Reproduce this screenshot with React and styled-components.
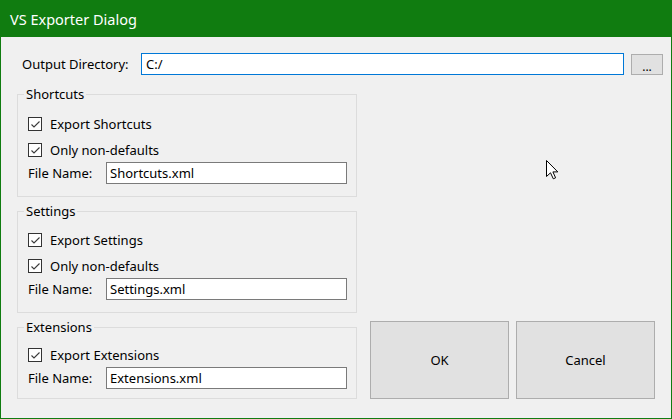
import React from "react";
import styled, { createGlobalStyle } from "styled-components";

const GlobalStyle = createGlobalStyle`
    html, body {
        margin: 0;
        padding: 0;
        background: #f0f0f0;
    }
    * { box-sizing: border-box; }
`;

const CheckMark = () => (
    <svg width="11" height="11" viewBox="0 0 11 11">
        <polyline points="1.5,5.5 4,8 9.5,2.5" fill="none" stroke="#3a3a3a" strokeWidth="1.1" />
    </svg>
);

const Cursor = () => (
    <svg width="13" height="20" viewBox="0 0 13 20">
        <path d="M0.5,0.5 L0.5,16.5 L4.5,12.8 L7.3,18.8 L9.6,17.8 L6.9,11.9 L11.8,11.9 Z"
            fill="#fff" stroke="#000" strokeWidth="1" strokeLinejoin="miter" />
    </svg>
);

const CheckOption = ({ label }) => (
    <CheckRow>
        <Box><CheckMark /></Box>
        <span>{label}</span>
    </CheckRow>
);

const FileField = ({ value }) => (
    <FileRow>
        <FieldLabel>File Name:</FieldLabel>
        <TextBox readOnly value={value} />
    </FileRow>
);

const App = () => {
    return (
        <Window>
            <GlobalStyle />
            <TitleBar>VS Exporter Dialog</TitleBar>
            <Content>
                <DirRow>
                    <DirLabel>Output Directory:</DirLabel>
                    <DirInput readOnly value="C:/" />
                    <BrowseBtn>...</BrowseBtn>
                </DirRow>
                <Main>
                    <Groups>
                        <GroupBox>
                            <Legend>Shortcuts</Legend>
                            <GroupBody $top={9} $bottom={12}>
                                <CheckOption label="Export Shortcuts" />
                                <CheckOption label="Only non-defaults" />
                                <FileField value="Shortcuts.xml" />
                            </GroupBody>
                        </GroupBox>
                        <GroupBox>
                            <Legend>Settings</Legend>
                            <GroupBody $top={8} $bottom={12}>
                                <CheckOption label="Export Settings" />
                                <CheckOption label="Only non-defaults" />
                                <FileField value="Settings.xml" />
                            </GroupBody>
                        </GroupBox>
                        <GroupBox>
                            <Legend>Extensions</Legend>
                            <GroupBody $top={7} $bottom={9}>
                                <CheckOption label="Export Extensions" />
                                <FileField value="Extensions.xml" />
                            </GroupBody>
                        </GroupBox>
                    </Groups>
                    <Spacer>
                        <CursorSpot><Cursor /></CursorSpot>
                    </Spacer>
                    <DialogBtn>OK</DialogBtn>
                    <DialogBtn>Cancel</DialogBtn>
                </Main>
            </Content>
        </Window>
    );
};

export default App;

const Window = styled.div`
    width: 672px;
    height: 419px;
    display: flex;
    flex-direction: column;
    background: #f0f0f0;
    border: 1px solid #107c10;
    border-top: none;
    font-family: "Segoe UI", "Noto Sans", sans-serif;
    font-size: 13px;
    color: #000;
`;

const TitleBar = styled.div`
    height: 37px;
    margin: 0 -1px;
    padding-left: 10px;
    display: flex;
    align-items: center;
    background: #107c10;
    color: #fff;
    font-size: 14.5px;
`;

const Content = styled.div`
    flex: 1;
    padding: 16px 0 0 16px;
    display: flex;
    flex-direction: column;
`;

const DirRow = styled.div`
    display: flex;
    align-items: center;
    height: 22px;
    padding-left: 5px;
`;

const DirLabel = styled.div`
    width: 119px;
`;

const DirInput = styled.input`
    width: 483px;
    height: 22px;
    border: 1px solid #0078d7;
    background: #fff;
    padding: 0 4px;
    font: inherit;
    outline: none;
`;

const BrowseBtn = styled.button`
    width: 32px;
    height: 21px;
    margin-left: 7px;
    margin-top: 1px;
    border: 1px solid #adadad;
    background: #e1e1e1;
    font: inherit;
    font-size: 12px;
    line-height: 14px;
    padding: 0;
    display: flex;
    align-items: flex-end;
    justify-content: center;
`;

const Main = styled.div`
    margin-top: 19px;
    display: grid;
    grid-template-columns: 346px 139px 139px;
    column-gap: 7px;
    align-items: end;
`;

const Groups = styled.div`
    grid-column: 1;
    grid-row: 1 / span 2;
    width: 340px;
    display: flex;
    flex-direction: column;
    gap: 14px;
`;

const Spacer = styled.div`
    grid-column: 2 / span 2;
    grid-row: 1;
    align-self: stretch;
    position: relative;
`;

const CursorSpot = styled.div`
    position: absolute;
    left: 176px;
    top: 66px;
    line-height: 0;
`;

const GroupBox = styled.div`
    border: 1px solid #dcdcdc;
    padding: 0 9px 0 10px;
`;

const Legend = styled.div`
    width: fit-content;
    margin: -9px 0 0 -4px;
    padding: 0 2px;
    height: 16px;
    line-height: 16px;
    background: #f0f0f0;
`;

const GroupBody = styled.div`
    padding-top: ${(p) => p.$top}px;
    padding-bottom: ${(p) => p.$bottom}px;
    display: flex;
    flex-direction: column;
`;

const CheckRow = styled.div`
    height: 26px;
    display: flex;
    align-items: center;
    gap: 8px;
`;

const Box = styled.span`
    width: 14px;
    height: 14px;
    border: 1px solid #333;
    background: #fff;
    display: flex;
    align-items: center;
    justify-content: center;
`;

const FileRow = styled.div`
    display: flex;
    align-items: center;
    margin-top: -1px;
`;

const FieldLabel = styled.div`
    width: 78px;
`;

const TextBox = styled.input`
    width: 241px;
    height: 22px;
    border: 1px solid #7a7a7a;
    background: #fff;
    padding: 0 3px;
    font: inherit;
    outline: none;
`;

const DialogBtn = styled.button`
    grid-row: 2;
    height: 78px;
    border: 1px solid #adadad;
    background: #e1e1e1;
    font: inherit;
    color: #000;
`;
